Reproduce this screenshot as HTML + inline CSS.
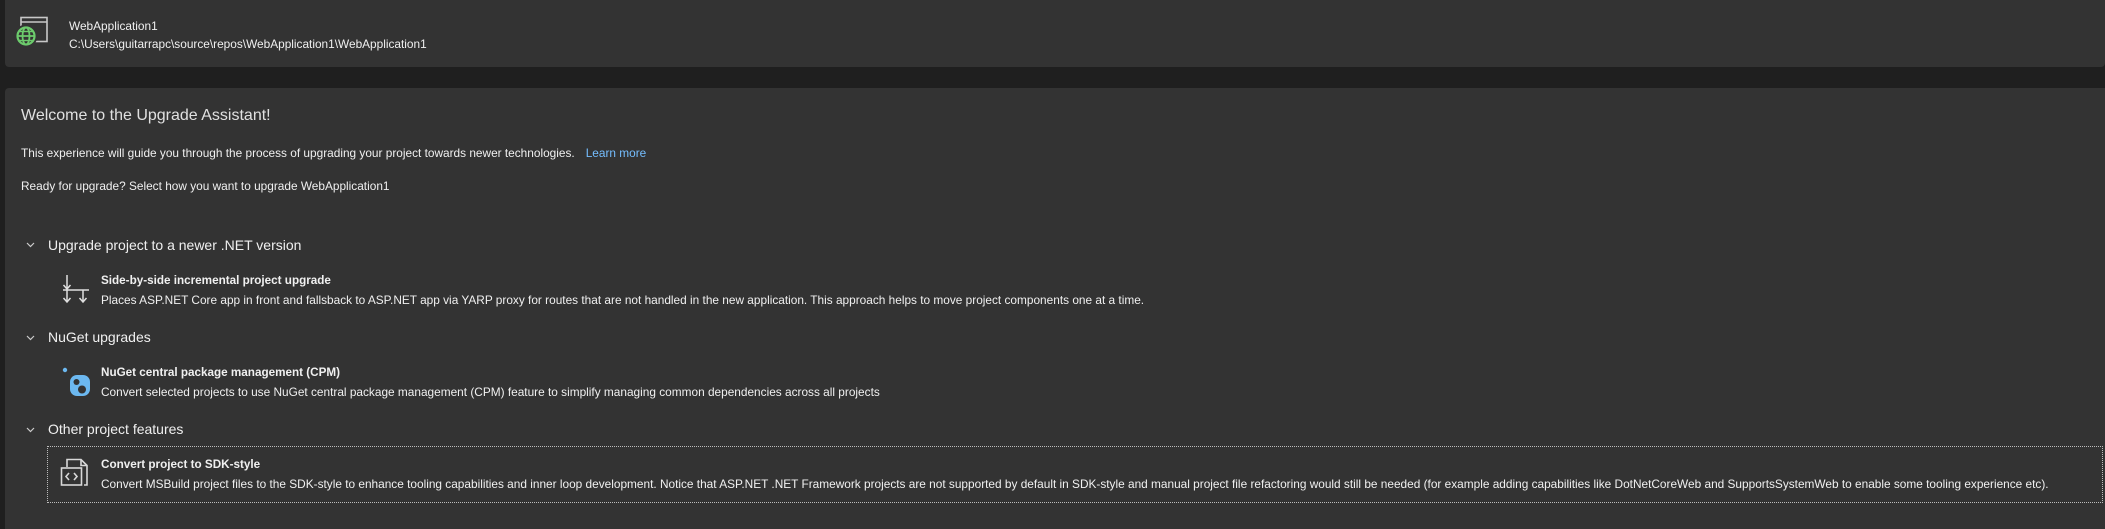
<!DOCTYPE html>
<html><head><meta charset="utf-8"><style>
html,body{margin:0;padding:0;background:#1f1f1f;width:2105px;height:529px;overflow:hidden;font-family:"Segoe UI","Liberation Sans",sans-serif;color:#f0f0f0}
.p1{position:absolute;left:5px;top:0;width:2100px;height:67px;background:#333333;border-radius:0 0 4px 4px}
.p2{position:absolute;left:5px;top:88px;width:2100px;height:441px;background:#333333;border-radius:4px 0 0 0}
.t{position:absolute;white-space:nowrap;font-size:11.85px;line-height:14px}
.h{font-size:16px;line-height:20px;color:#e0e0e0}
.s{font-size:14px;line-height:18px}
.b{font-weight:bold;font-size:11.7px}
svg{position:absolute}
.box{position:absolute;left:47px;top:446px;width:2054px;height:55px;border:1px dotted #bdbdbd}
</style></head><body>
<div class="p1"></div>
<div class="p2"></div>
<svg style="left:13px;top:16px" width="36" height="34" viewBox="0 0 36 34">
<rect x="8" y="1.5" width="26" height="24" fill="none" stroke="#c8c8c8" stroke-width="1.6"/>
<line x1="8" y1="6" x2="34" y2="6" stroke="#c8c8c8" stroke-width="1.6"/>
<circle cx="13" cy="20" r="11.5" fill="#333"/>
<circle cx="13" cy="20" r="8.5" fill="none" stroke="#6ccb6c" stroke-width="2.2"/>
<ellipse cx="13" cy="20" rx="3.5" ry="8.5" fill="none" stroke="#6ccb6c" stroke-width="1.8"/>
<line x1="4.5" y1="20" x2="21.5" y2="20" stroke="#6ccb6c" stroke-width="1.8"/>
<line x1="6" y1="15.5" x2="20" y2="15.5" stroke="#6ccb6c" stroke-width="1.4"/>
<line x1="6" y1="24.5" x2="20" y2="24.5" stroke="#6ccb6c" stroke-width="1.4"/>
</svg>
<div class="t" style="left:69px;top:19px">WebApplication1</div>
<div class="t" style="left:69px;top:37px">C:\Users\guitarrapc\source\repos\WebApplication1\WebApplication1</div>

<div class="t h" style="left:21px;top:106px">Welcome to the Upgrade Assistant!</div>
<div class="t" style="left:21px;top:146px">This experience will guide you through the process of upgrading your project towards newer technologies.<span style="color:#75beff;margin-left:11px">Learn more</span></div>
<div class="t" style="left:21px;top:179px">Ready for upgrade? Select how you want to upgrade WebApplication1</div>

<svg style="left:26px;top:242px" width="9" height="6" viewBox="0 0 9 6"><path d="M1 1 L4.5 4.5 L8 1" fill="none" stroke="#ccc" stroke-width="1.2"/></svg>
<div class="t s" style="left:48px;top:236px">Upgrade project to a newer .NET version</div>
<svg style="left:62px;top:274px" width="28" height="30" viewBox="0 0 28 30" fill="none" stroke="#e0e0e0" stroke-width="1.5">
<path d="M5 1 V15"/><path d="M1.5 11 L5 15 L8.5 11"/><path d="M1 16 H27"/><path d="M5 16 V28"/><path d="M1.5 24 L5 28 L8.5 24"/><path d="M21 16 V28"/><path d="M17.5 24 L21 28 L24.5 24"/>
</svg>
<div class="t b" style="left:101px;top:274px">Side-by-side incremental project upgrade</div>
<div class="t" style="left:101px;top:293px">Places ASP.NET Core app in front and fallsback to ASP.NET app via YARP proxy for routes that are not handled in the new application. This approach helps to move project components one at a time.</div>

<svg style="left:26px;top:335px" width="9" height="6" viewBox="0 0 9 6"><path d="M1 1 L4.5 4.5 L8 1" fill="none" stroke="#ccc" stroke-width="1.2"/></svg>
<div class="t s" style="left:48px;top:328px">NuGet upgrades</div>
<svg style="left:62px;top:367px" width="30" height="30" viewBox="0 0 30 30">
<circle cx="3" cy="3" r="2.2" fill="#6cb8f0"/>
<rect x="8" y="8" width="20" height="21" rx="7" fill="#6cb8f0"/>
<circle cx="14.5" cy="15" r="3" fill="#333"/>
<circle cx="20" cy="22.5" r="4" fill="#333"/>
</svg>
<div class="t b" style="left:101px;top:366px">NuGet central package management (CPM)</div>
<div class="t" style="left:101px;top:385px">Convert selected projects to use NuGet central package management (CPM) feature to simplify managing common dependencies across all projects</div>

<svg style="left:26px;top:427px" width="9" height="6" viewBox="0 0 9 6"><path d="M1 1 L4.5 4.5 L8 1" fill="none" stroke="#ccc" stroke-width="1.2"/></svg>
<div class="t s" style="left:48px;top:420px">Other project features</div>
<div class="box"></div>
<svg style="left:60px;top:458px" width="30" height="30" viewBox="0 0 30 30" fill="none" stroke="#d8d8d8" stroke-width="1.6">
<path d="M7 9 V1.5 H21 L27 7.5 V27 H24"/><path d="M21 1.5 V7.5 H27"/>
<rect x="1.5" y="10" width="20" height="17"/>
<path d="M9 15 L6 18.5 L9 22"/><path d="M14 15 L17 18.5 L14 22"/>
</svg>
<div class="t b" style="left:101px;top:458px">Convert project to SDK-style</div>
<div class="t" style="left:101px;top:477px">Convert MSBuild project files to the SDK-style to enhance tooling capabilities and inner loop development. Notice that ASP.NET .NET Framework projects are not supported by default in SDK-style and manual project file refactoring would still be needed (for example adding capabilities like DotNetCoreWeb and SupportsSystemWeb to enable some tooling experience etc).</div>
</body></html>
